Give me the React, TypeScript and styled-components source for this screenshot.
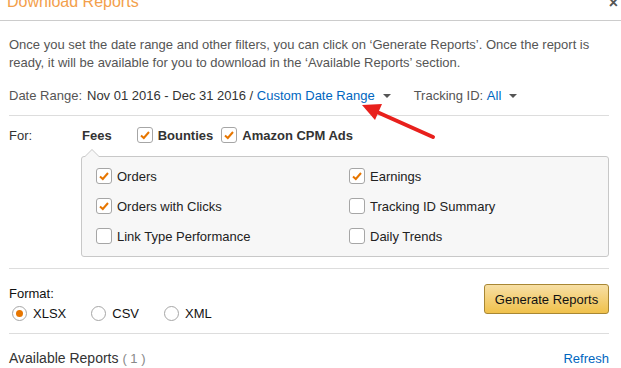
import styled, { createGlobalStyle } from "styled-components";

const GlobalStyle = createGlobalStyle`
  body {
    margin: 0;
    font-family: "Liberation Sans", Arial, sans-serif;
    background: #fff;
    color: #333;
  }
`;

const Modal = styled.div`
  position: relative;
  width: 621px;
  height: 368px;
  overflow: hidden;
  background: #fff;
`;

const Header = styled.div`
  height: 20px;
  border-bottom: 1px solid #ccc;
  display: flex;
  justify-content: space-between;
  align-items: flex-end;
  padding: 0 3px 0 7px;
  overflow: hidden;
`;

const Title = styled.div`
  font-size: 16px;
  line-height: 16px;
  color: #f3a04c;
  margin-bottom: 10px;
`;

const Close = styled.div`
  align-self: flex-start;
  margin-top: -4px;
  font-size: 16px;
  line-height: 14px;
  font-weight: bold;
  color: #555;
`;

const Body = styled.div`
  padding: 0 12px 0 9px;
`;

const Description = styled.p`
  margin: 15px 0 0;
  font-size: 13px;
  line-height: 18px;
  color: #555;
`;

const FilterRow = styled.div`
  margin-top: 15px;
  display: flex;
  align-items: center;
  font-size: 13px;
  line-height: 18px;
`;

const Muted = styled.span`
  color: #555;
  margin-right: ${(p: { $gap?: number }) => p.$gap ?? 0}px;
`;

const Value = styled.span`
  color: #333;
  white-space: pre;
`;

const Link = styled.span`
  color: #0066c0;
`;

const Caret = styled.span`
  display: inline-block;
  width: 0;
  height: 0;
  margin: 0 0 0 8px;
  border-left: 4px solid transparent;
  border-right: 4px solid transparent;
  border-top: 4px solid #555;
`;

const DropGroup = styled.div`
  display: flex;
  align-items: center;
  margin-right: 23px;
`;

const Divider = styled.div<{ $top: number }>`
  height: 1px;
  background: #ddd;
  margin-top: ${(p) => p.$top}px;
`;

const ForRow = styled.div`
  margin-top: 10px;
  height: 18px;
  display: flex;
  align-items: center;
  font-size: 13px;
`;

const ForLabel = styled.div`
  width: 73px;
  color: #333;
`;

const Tab = styled.div`
  font-weight: bold;
  color: #333;
  margin-right: 25px;
`;

const CheckItem = styled.label<{ $bold?: boolean; $gap?: number }>`
  display: flex;
  align-items: center;
  gap: 5px;
  margin-right: ${(p) => p.$gap ?? 0}px;
  font-size: 13px;
  font-weight: ${(p) => (p.$bold ? "bold" : "normal")};
  color: ${(p) => (p.$bold ? "#333" : "#222")};
`;

const Box = styled.span`
  width: 14px;
  height: 14px;
  border: 1px solid #a6a6a6;
  border-radius: 3px;
  background: #fff;
  display: flex;
  align-items: center;
  justify-content: center;
  flex: 0 0 auto;
`;

const Panel = styled.div`
  position: relative;
  margin: 12px 0 0 72px;
  padding: 4px 14px 5px;
  border: 1px solid #c8c8c8;
  border-radius: 3px;
  background: #f7f7f7;
  display: grid;
  grid-template-columns: 253px 1fr;
  grid-auto-rows: 30px;
  align-items: center;

  &::before,
  &::after {
    content: "";
    position: absolute;
    width: 0;
    height: 0;
    border-left: 8px solid transparent;
    border-right: 8px solid transparent;
  }
  &::before {
    top: -8px;
    left: 2px;
    border-bottom: 8px solid #c8c8c8;
  }
  &::after {
    top: -7px;
    left: 2px;
    border-bottom: 8px solid #f7f7f7;
  }
`;

const FormatSection = styled.div`
  display: flex;
  justify-content: space-between;
  align-items: flex-start;
  padding: 15px 0 10px;
`;

const FormatColumn = styled.div`
  margin-top: 1px;
  font-size: 13px;
`;

const FormatLabel = styled.div`
  line-height: 18px;
  color: #111;
`;

const RadioRow = styled.div`
  height: 20px;
  display: flex;
  align-items: center;
`;

const RadioOption = styled.label`
  display: flex;
  align-items: center;
  margin-right: 22px;
  color: #111;
`;

const Radio = styled.span<{ $on?: boolean }>`
  width: 13px;
  height: 13px;
  margin: 0 6px 0 3px;
  border: 1px solid #a6a6a6;
  border-radius: 50%;
  background: #fff;
  display: flex;
  align-items: center;
  justify-content: center;

  &::after {
    content: "";
    display: ${(p) => (p.$on ? "block" : "none")};
    width: 7px;
    height: 7px;
    border-radius: 50%;
    background: #e77600;
  }
`;

const GenerateButton = styled.button`
  width: 125px;
  height: 30px;
  padding: 0;
  border: 1px solid #a88734;
  border-radius: 3px;
  background: linear-gradient(to bottom, #f7dfa5, #f0c14b);
  font-family: inherit;
  font-size: 13px;
  color: #111;
`;

const Footer = styled.div`
  margin-top: 15px;
  line-height: 18px;
  display: flex;
  justify-content: space-between;
  align-items: center;
`;

const FooterTitle = styled.div`
  font-size: 14px;
  color: #333;
`;

const Count = styled.span`
  font-size: 13px;
  color: #888;
`;

const RefreshLink = styled.span`
  font-size: 13px;
  color: #0066c0;
`;

const ArrowLayer = styled.svg`
  position: absolute;
  left: 0;
  top: 0;
  pointer-events: none;
`;

function Check({ on }: { on?: boolean }) {
  return (
    <Box>
      {on && (
        <svg width="12" height="12" viewBox="0 0 12 12">
          <path d="M2 6.5 L4.8 9 L10 3" fill="none" stroke="#e77600" strokeWidth="2" />
        </svg>
      )}
    </Box>
  );
}

const reports = [
  { label: "Orders", on: true },
  { label: "Earnings", on: true },
  { label: "Orders with Clicks", on: true },
  { label: "Tracking ID Summary", on: false },
  { label: "Link Type Performance", on: false },
  { label: "Daily Trends", on: false },
];

export default function App() {
  return (
    <>
      <GlobalStyle />
      <Modal>
        <Header>
          <Title>Download Reports</Title>
          <Close>×</Close>
        </Header>
        <Body>
          <Description>
            Once you set the date range and other filters, you can click on ‘Generate Reports’. Once the report is
            ready, it will be available for you to download in the ‘Available Reports’ section.
          </Description>
          <FilterRow>
            <Muted $gap={5}>Date Range:</Muted>
            <Value>Nov 01 2016 - Dec 31 2016 / </Value>
            <DropGroup>
              <Link>Custom Date Range</Link>
              <Caret />
            </DropGroup>
            <DropGroup>
              <Muted>Tracking ID:&nbsp;</Muted>
              <Link>All</Link>
              <Caret />
            </DropGroup>
          </FilterRow>
          <Divider $top={10} />
          <ForRow>
            <ForLabel>For:</ForLabel>
            <Tab>Fees</Tab>
            <CheckItem $bold $gap={8}>
              <Check on />
              Bounties
            </CheckItem>
            <CheckItem $bold>
              <Check on />
              Amazon CPM Ads
            </CheckItem>
          </ForRow>
          <Panel>
            {reports.map((r) => (
              <CheckItem key={r.label}>
                <Check on={r.on} />
                {r.label}
              </CheckItem>
            ))}
          </Panel>
          <Divider $top={11} />
          <FormatSection>
            <FormatColumn>
              <FormatLabel>Format:</FormatLabel>
              <RadioRow>
                <RadioOption>
                  <Radio $on />
                  XLSX
                </RadioOption>
                <RadioOption>
                  <Radio />
                  CSV
                </RadioOption>
                <RadioOption>
                  <Radio />
                  XML
                </RadioOption>
              </RadioRow>
            </FormatColumn>
            <GenerateButton>Generate Reports</GenerateButton>
          </FormatSection>
          <Divider $top={0} />
          <Footer>
            <FooterTitle>
              Available Reports <Count>( 1 )</Count>
            </FooterTitle>
            <RefreshLink>Refresh</RefreshLink>
          </Footer>
        </Body>
        <ArrowLayer width="621" height="368">
          <line x1="433" y1="137" x2="377" y2="112" stroke="#e8201c" strokeWidth="4" strokeLinecap="round" />
          <polygon points="362,105 382,104 375,120" fill="#e8201c" />
        </ArrowLayer>
      </Modal>
    </>
  );
}
